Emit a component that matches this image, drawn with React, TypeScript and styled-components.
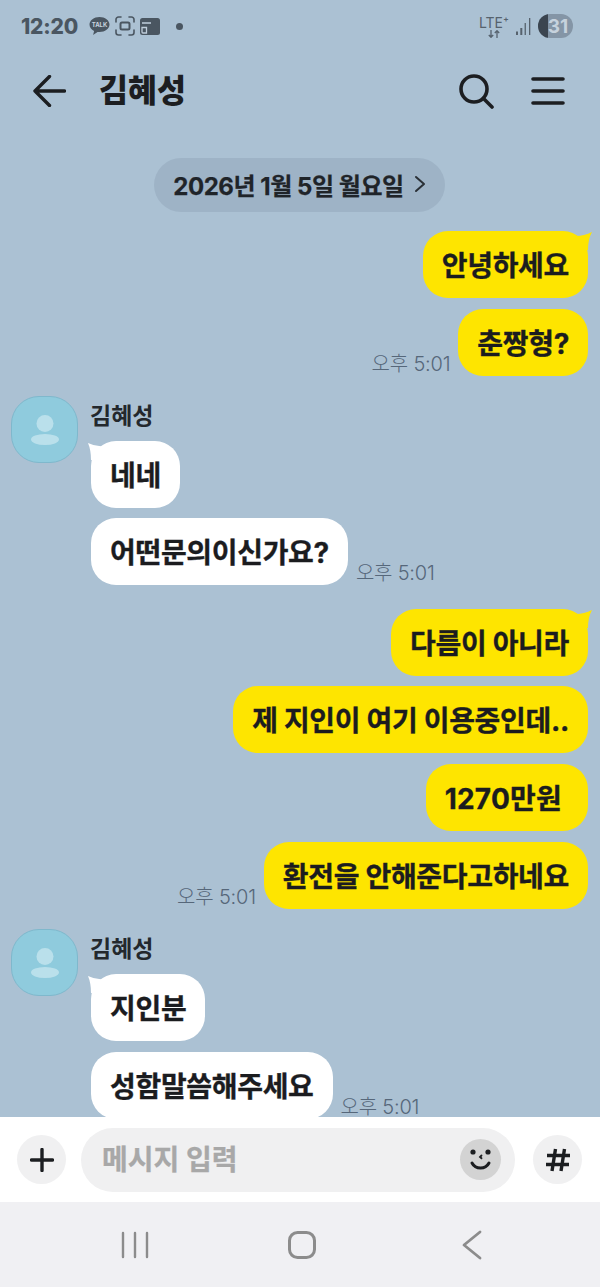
import { ReactElement, ReactNode } from "react";
import styled, { createGlobalStyle } from "styled-components";

const GlobalStyle = createGlobalStyle`
  html, body {
    margin: 0;
    padding: 0;
    background: #abc1d3;
    font-family: "Inter", "Noto Sans CJK KR", "Noto Sans", sans-serif;
  }
  * { box-sizing: border-box; }
`;

const Page = styled.div`
  width: 600px;
  height: 1287px;
  display: flex;
  flex-direction: column;
  overflow: hidden;
  background: #abc1d3;
`;

const StatusBar = styled.div`
  height: 50px;
  flex: none;
  display: flex;
  align-items: center;
  padding: 2px 27px 0 21px;
  color: #4a5661;
`;

const Clock = styled.span`
  font-size: 21px;
  font-weight: 800;
  letter-spacing: -0.2px;
  margin-right: 11px;
`;

const StatusIcons = styled.div`
  display: flex;
  align-items: center;
  gap: 5px;
`;

const Dot = styled.span`
  width: 7px;
  height: 7px;
  border-radius: 50%;
  background: #4a5661;
  margin-left: 16px;
`;

const StatusRight = styled.div`
  margin-left: auto;
  display: flex;
  align-items: center;
  gap: 7px;
`;

const Lte = styled.div`
  display: flex;
  flex-direction: column;
  align-items: center;
  font-size: 14px;
  line-height: 14px;
  color: #56626d;
  width: 30px;
  margin-top: 1px;
  svg { display: block; }
`;

const Battery = styled.div`
  position: relative;
  width: 35px;
  height: 24px;
  border-radius: 12px;
  background: #8495a6;
  overflow: hidden;
  display: flex;
  align-items: center;
  justify-content: center;
  color: #c6d2dd;
  font-size: 19px;
  font-weight: 700;
  padding-left: 5px;
  &::before {
    content: "";
    position: absolute;
    left: 0;
    top: 0;
    bottom: 0;
    width: 10px;
    background: #3b4550;
  }
`;

const Header = styled.header`
  height: 80px;
  flex: none;
  display: flex;
  align-items: center;
  padding: 0 35px 0 33px;
  margin-top: 1px;
  margin-bottom: -1px;
`;

const BackButton = styled.div`
  width: 66px;
  display: flex;
  svg { display: block; }
`;

const Title = styled.h1`
  margin: 0;
  font-size: 31.5px;
  font-weight: 900;
  color: #1c1e21;
  line-height: 40px;
`;

const HeaderActions = styled.div`
  margin-left: auto;
  display: flex;
  align-items: center;
  gap: 37px;
  svg { display: block; }
`;

const Chat = styled.main`
  flex: 1;
  min-height: 0;
  overflow: hidden;
  display: flex;
  flex-direction: column;
  padding: 28px 12px 0 11px;
`;

const DatePill = styled.div`
  align-self: center;
  height: 54px;
  width: 291px;
  padding-bottom: 2px;
  border-radius: 27px;
  background: #9eb3c6;
  display: flex;
  align-items: center;
  justify-content: center;
  gap: 10px;
  font-size: 24px;
  font-weight: 700;
  color: #1f2429;
  margin-bottom: 19px;
  letter-spacing: -0.45px;
  -webkit-text-stroke: 0.25px #1f2429;
  flex: none;
`;

const Line = styled.div<{ $mine?: boolean; $gap?: number }>`
  display: flex;
  align-items: flex-end;
  justify-content: ${(p) => (p.$mine ? "flex-end" : "flex-start")};
  gap: 8px;
  flex: none;
  margin-top: ${(p) => p.$gap ?? 10}px;
`;

const Bubble = styled.div<{ $mine?: boolean; $track?: number }>`
  position: relative;
  height: 67px;
  padding: 0 19px 2px;
  border-radius: 25px;
  background: ${(p) => (p.$mine ? "#fee500" : "#ffffff")};
  color: #1b1c1f;
  font-size: 28px;
  font-weight: 700;
  letter-spacing: ${(p) => p.$track ?? -0.32}px;
  -webkit-text-stroke: 0.35px #1b1c1f;
  display: flex;
  align-items: center;
  white-space: pre;
`;

const Tail = styled.svg<{ $mine?: boolean }>`
  position: absolute;
  top: 1px;
  ${(p) => (p.$mine ? "right: -4px;" : "left: -3px;")}
`;

const Time = styled.span`
  font-size: 20px;
  line-height: 24px;
  color: #56677a;
  letter-spacing: -0.2px;
  font-weight: 300;
`;

const Group = styled.section<{ $gap: number }>`
  display: flex;
  gap: 13px;
  flex: none;
  margin-top: ${(p) => p.$gap}px;
`;

const Avatar = styled.div`
  width: 67px;
  height: 67px;
  flex: none;
  border-radius: 28px;
  background: #8fcbdd;
  border: 1px solid #7fb8cc;
  display: flex;
  align-items: center;
  justify-content: center;
`;

const GroupBody = styled.div`
  display: flex;
  flex-direction: column;
`;

const Sender = styled.div`
  font-size: 23px;
  font-weight: 700;
  line-height: 41px;
  height: 35px;
  margin-left: -1px;
  color: #23282d;
`;

const InputBar = styled.div`
  height: 85px;
  flex: none;
  background: #ffffff;
  display: flex;
  align-items: center;
  padding: 0 18px 0 17px;
  gap: 15px;
`;

const RoundButton = styled.div`
  width: 49px;
  height: 49px;
  flex: none;
  border-radius: 50%;
  background: #f0f0f1;
  display: flex;
  align-items: center;
  justify-content: center;
`;

const Field = styled.div`
  flex: 1;
  height: 64px;
  border-radius: 32px;
  background: #f0f0f1;
  display: flex;
  align-items: center;
  padding: 0 14px 0 21px;
  margin-right: 3px;
  color: #a8a8a8;
  font-size: 28px;
  font-weight: 700;
`;

const FieldHint = styled.span`
  margin-bottom: 3px;
  -webkit-text-stroke: 0.3px #a8a8a8;
`;

const Smile = styled.div`
  margin-left: auto;
  width: 41px;
  height: 41px;
  border-radius: 50%;
  background: #d3d3d3;
  display: flex;
  align-items: center;
  justify-content: center;
`;

const NavBar = styled.nav`
  height: 85px;
  flex: none;
  background: #f0f0f3;
  display: flex;
  align-items: center;
  justify-content: space-between;
  padding: 0 118px 0 121px;
  svg { display: block; }
`;

const HomeIcon = styled.svg`
  margin-right: 7px;
`;

type MessageProps = { text: string; time?: boolean; tail?: boolean; gap?: number; track?: number };

function Outgoing({ text, time, tail, gap, track }: MessageProps): ReactElement {
  return (
    <Line $mine $gap={gap}>
      {time && <Time>오후 5:01</Time>}
      <Bubble $mine $track={track}>
        {tail && (
          <Tail $mine width="16" height="18" viewBox="0 0 16 18">
            <path d="M0 4 Q8 4 16 0 Q12 7 12 18 L0 18 Z" fill="#fee500" />
          </Tail>
        )}
        {text}
      </Bubble>
    </Line>
  );
}

function Incoming({ text, time, tail, gap }: MessageProps): ReactElement {
  return (
    <Line $gap={gap}>
      <Bubble>
        {tail && (
          <Tail width="16" height="18" viewBox="0 0 16 18">
            <path d="M16 4 Q8 5 0 1 Q3 8 3 18 L16 18 Z" fill="#ffffff" />
          </Tail>
        )}
        {text}
      </Bubble>
      {time && <Time>오후 5:01</Time>}
    </Line>
  );
}

function ChatGroup({ gap, children }: { gap: number; children: ReactNode }): ReactElement {
  return (
    <Group $gap={gap}>
      <Avatar>
        <svg width="30" height="32" viewBox="0 0 30 32">
          <circle cx="15" cy="9.5" r="8.500" fill="#bae0eb" />
          <ellipse cx="15" cy="25.500" rx="14" ry="5.500" fill="#bae0eb" />
        </svg>
      </Avatar>
      <GroupBody>
        <Sender>김혜성</Sender>
        {children}
      </GroupBody>
    </Group>
  );
}

export default function App(): ReactElement {
  return (
    <>
      <GlobalStyle />
      <Page>
        <StatusBar>
          <Clock>12:20</Clock>
          <StatusIcons>
            <svg width="21" height="20" viewBox="0 0 21 20">
              <path d="M10.5 1C5 1 .5 4.4.5 8.6c0 2.7 1.8 5 4.6 6.4l-1 3.9 4.4-3c.7.1 1.4.2 2 .2 5.5 0 10-3.3 10-7.5S16 1 10.5 1z" fill="#4a5661" />
              <text x="10.5" y="11" fontSize="6" fontFamily="Inter, sans-serif" fontWeight="700" fill="#c8d4df" textAnchor="middle">TALK</text>
            </svg>
            <svg width="20" height="20" viewBox="0 0 20 20" fill="none" stroke="#4a5661" strokeWidth="1.6" strokeLinecap="round">
              <path d="M1 6V3.500A2.500 2.500 0 0 1 3.500 1H6M14 1h2.500A2.500 2.500 0 0 1 19 3.500V6M19 14v2.500a2.500 2.500 0 0 1-2.500 2.500H14M6 19H3.500A2.500 2.500 0 0 1 1 16.500V14" />
              <rect x="5.500" y="6.500" width="9" height="7" rx="1.500" strokeWidth="2" />
            </svg>
            <svg width="20" height="17" viewBox="0 0 20 17">
              <rect x="0" y="0" width="20" height="17" rx="2.500" fill="#4a5661" />
              <path d="M2 5h9M2 9.500h4.500V15H3a1 1 0 0 1-1-1z" stroke="#c0cedb" strokeWidth="1.300" fill="none" />
            </svg>
          </StatusIcons>
          <Dot />
          <StatusRight>
            <Lte>
              LTE⁺
              <svg width="12" height="8" viewBox="0 0 12 8" fill="none" stroke="#56626d" strokeWidth="1.300">
                <path d="M3 0v7M.8 5 3 7.300 5.200 5M9 8V1M6.800 3 9 .7 11.200 3" />
              </svg>
            </Lte>
            <svg width="15" height="17" viewBox="0 0 15 17" fill="#56626d">
              <rect x="0" y="13.500" width="2" height="3.500" />
              <rect x="4.300" y="10" width="2" height="7" />
              <rect x="8.600" y="5" width="1.300" height="12" />
              <rect x="13" y="0" width="1.300" height="17" />
            </svg>
            <Battery>31</Battery>
          </StatusRight>
        </StatusBar>

        <Header>
          <BackButton>
            <svg width="33" height="32" viewBox="0 0 33 32" fill="none" stroke="#1c1e21" strokeWidth="3.400" strokeLinecap="round" strokeLinejoin="round">
              <path d="M31.500 16H2M16.500 1.500 2 16l14.500 14.500" />
            </svg>
          </BackButton>
          <Title>김혜성</Title>
          <HeaderActions>
            <svg width="35" height="35" viewBox="0 0 35 35" fill="none" stroke="#1c1e21" strokeWidth="3.600" strokeLinecap="round">
              <circle cx="15" cy="15" r="13" />
              <path d="M24.500 24.500 33 33" />
            </svg>
            <svg width="34" height="30" viewBox="0 0 34 30" fill="none" stroke="#1c1e21" strokeWidth="3.600" strokeLinecap="round">
              <path d="M2 3h30M2 15h30M2 27h30" />
            </svg>
          </HeaderActions>
        </Header>

        <Chat>
          <DatePill>
            <span>2026년 1월 5일 월요일</span>
            <svg width="12" height="18" viewBox="0 0 12 18" fill="none" stroke="#2a3036" strokeWidth="2" strokeLinecap="round" strokeLinejoin="round">
              <path d="M2 2l8 7-8 7" />
            </svg>
          </DatePill>

          <Outgoing text="안녕하세요" tail gap={0} />
          <Outgoing text="춘짱형?" time gap={11} />

          <ChatGroup gap={20}>
            <Incoming text="네네" tail gap={10} />
            <Incoming text="어떤문의이신가요?" time />
          </ChatGroup>

          <Outgoing text="다름이 아니라" tail gap={24} />
          <Outgoing text="제 지인이 여기 이용중인데.." />
          <Outgoing text="1270만원 " gap={11} track={0.25} />
          <Outgoing text="환전을 안해준다고하네요" time gap={11} />

          <ChatGroup gap={20}>
            <Incoming text="지인분" tail gap={10} />
            <Incoming text="성함말씀해주세요" time gap={11} />
          </ChatGroup>
        </Chat>

        <InputBar>
          <RoundButton>
            <svg width="24" height="24" viewBox="0 0 24 24" stroke="#1c1e21" strokeWidth="3.400" strokeLinecap="round">
              <path d="M12 1.500v21M1.500 12h21" />
            </svg>
          </RoundButton>
          <Field>
            <FieldHint>메시지 입력</FieldHint>
            <Smile>
              <svg width="24" height="24" viewBox="0 0 24 24" fill="none" stroke="#1c1e21" strokeLinecap="round">
                <circle cx="4" cy="4" r="2.600" fill="#1c1e21" stroke="none" />
                <circle cx="19" cy="4" r="2.600" fill="#1c1e21" stroke="none" />
                <path d="M12.500 7.500 11 9l1.500 1.300" strokeWidth="1.800" />
                <path d="M3 15c2 3.800 5.500 5 8.500 5s6.500-1.200 8.500-5" strokeWidth="3" />
              </svg>
            </Smile>
          </Field>
          <RoundButton>
            <svg width="24" height="24" viewBox="0 0 24 24" stroke="#1c1e21" strokeWidth="3.400" strokeLinecap="butt">
              <path d="M9.500 1 6 23M18.500 1 15 23M1 7.500h23M0 16.500h23" />
            </svg>
          </RoundButton>
        </InputBar>

        <NavBar>
          <svg width="28" height="28" viewBox="0 0 28 28" stroke="#8c8c8c" strokeWidth="2.400" strokeLinecap="round">
            <path d="M2 2v24M14 2v24M26 2v24" />
          </svg>
          <HomeIcon width="28" height="28" viewBox="0 0 28 28" fill="none" stroke="#8c8c8c" strokeWidth="3">
            <rect x="1.500" y="1.500" width="25" height="25" rx="8" />
          </HomeIcon>
          <svg width="20" height="30" viewBox="0 0 20 30" fill="none" stroke="#8c8c8c" strokeWidth="2.800" strokeLinecap="round" strokeLinejoin="round">
            <path d="M18 2 2 15l16 13" />
          </svg>
        </NavBar>
      </Page>
    </>
  );
}
